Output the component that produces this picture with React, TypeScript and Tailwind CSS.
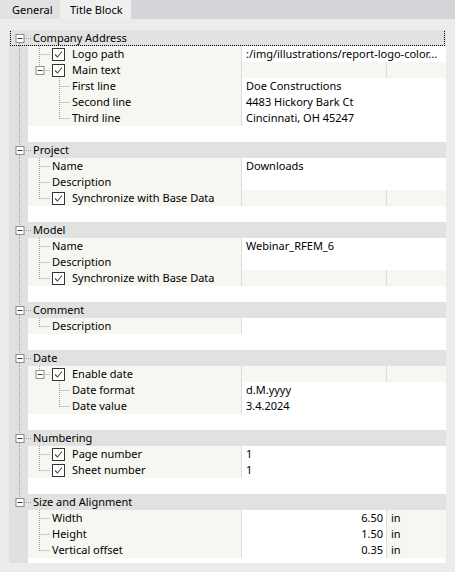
import React from "react";

type ValKind = "white" | "cream" | "split" | "unit" | "none";

type Item = {
  label: string;
  check?: boolean;
  expand?: boolean;
  value?: string;
  kind?: ValKind;
  unit?: string;
  children?: Item[];
};

type Group = { title: string; focused?: boolean; items: Item[] };

const groups: Group[] = [
  {
    title: "Company Address",
    focused: true,
    items: [
      { label: "Logo path", check: true, value: ":/img/illustrations/report-logo-color...", kind: "white" },
      {
        label: "Main text",
        check: true,
        expand: true,
        kind: "split",
        children: [
          { label: "First line", value: "Doe Constructions", kind: "white" },
          { label: "Second line", value: "4483 Hickory Bark Ct", kind: "white" },
          { label: "Third line", value: "Cincinnati, OH 45247", kind: "white" },
        ],
      },
    ],
  },
  {
    title: "Project",
    items: [
      { label: "Name", value: "Downloads", kind: "white" },
      { label: "Description", value: "", kind: "white" },
      { label: "Synchronize with Base Data", check: true, kind: "split" },
    ],
  },
  {
    title: "Model",
    items: [
      { label: "Name", value: "Webinar_RFEM_6", kind: "white" },
      { label: "Description", value: "", kind: "white" },
      { label: "Synchronize with Base Data", check: true, kind: "split" },
    ],
  },
  {
    title: "Comment",
    items: [{ label: "Description", value: "", kind: "white" }],
  },
  {
    title: "Date",
    items: [
      {
        label: "Enable date",
        check: true,
        expand: true,
        kind: "split",
        children: [
          { label: "Date format", value: "d.M.yyyy", kind: "white" },
          { label: "Date value", value: "3.4.2024", kind: "white" },
        ],
      },
    ],
  },
  {
    title: "Numbering",
    items: [
      { label: "Page number", check: true, value: "1", kind: "white" },
      { label: "Sheet number", check: true, value: "1", kind: "white" },
    ],
  },
  {
    title: "Size and Alignment",
    items: [
      { label: "Width", value: "6.50", unit: "in", kind: "unit" },
      { label: "Height", value: "1.50", unit: "in", kind: "unit" },
      { label: "Vertical offset", value: "0.35", unit: "in", kind: "unit" },
    ],
  },
];

const LINE = "#a0a0a0";

function Dots({ x1, y1, x2, y2 }: { x1: number; y1: number; x2: number; y2: number }) {
  return <line x1={x1} y1={y1} x2={x2} y2={y2} stroke={LINE} strokeWidth={1} strokeDasharray="1 1" />;
}

function Box({ cx }: { cx: number }) {
  return (
    <g>
      <rect x={cx - 3.5} y={4.5} width={8} height={8} fill="#ffffff" stroke="#8c8c8c" strokeWidth={1} />
      <line x1={cx - 2} y1={8.5} x2={cx + 3} y2={8.5} stroke="#404040" strokeWidth={1} />
    </g>
  );
}

function CheckBox() {
  return (
    <svg width="13" height="13" viewBox="0 0 13 13" className="shrink-0">
      <rect x="0.5" y="0.5" width="12" height="12" fill="#ffffff" stroke="#333333" />
      <polyline points="3,6.5 5.5,9 10,3.5" fill="none" stroke="#4a4a4a" strokeWidth="1.1" />
    </svg>
  );
}

function StripeCell({ groupLast, header, first }: { groupLast: boolean; header?: boolean; first?: boolean }) {
  return (
    <svg width="19" height="16" className="shrink-0">
      {header ? (
        <>
          {!first && <Dots x1={10.5} y1={0} x2={10.5} y2={4} />}
          {!groupLast && <Dots x1={10.5} y1={13} x2={10.5} y2={16} />}
          <Dots x1={15} y1={8.5} x2={19} y2={8.5} />
          <Box cx={10.5} />
        </>
      ) : (
        !groupLast && <Dots x1={10.5} y1={0} x2={10.5} y2={16} />
      )}
    </svg>
  );
}

function ValueCell({ item }: { item: Item }) {
  const k = item.kind ?? "white";
  if (k === "unit") {
    return (
      <div className="flex flex-1 h-full">
        <div className="w-[145px] h-full bg-white text-right pr-[3px] border-l border-[#dcdcdc]">{item.value}</div>
        <div className="flex-1 h-full bg-[#f7f7f1] pl-[4px] border-l border-[#dcdcdc]">{item.unit}</div>
      </div>
    );
  }
  if (k === "split") {
    return (
      <div className="flex flex-1 h-full">
        <div className="w-[145px] h-full bg-[#f7f7f1] border-l border-[#dcdcdc]" />
        <div className="flex-1 h-full bg-[#f7f7f1] border-l border-[#dcdcdc]" />
      </div>
    );
  }
  return (
    <div className="flex-1 min-w-0 h-full bg-white border-l border-[#dcdcdc] pl-[4px] whitespace-nowrap overflow-hidden">
      {item.value}
    </div>
  );
}

function ItemRow({
  item,
  level,
  groupLast,
  isLast,
  parentContinues,
}: {
  item: Item;
  level: 1 | 2;
  groupLast: boolean;
  isLast: boolean;
  parentContinues?: boolean;
}) {
  const w = level === 1 ? 24 : 44;
  const cx = level === 1 ? 11.5 : 31.5;
  const hasKids = !!item.children;
  return (
    <div className="flex h-4 items-stretch">
      <StripeCell groupLast={groupLast} />
      <div className="flex flex-1 bg-[#f7f7f1]">
        <div className="flex w-[213px] shrink-0 items-center">
          <svg width={w} height="16" className="shrink-0">
            {level === 2 && parentContinues && <Dots x1={11.5} y1={0} x2={11.5} y2={16} />}
            {hasKids ? (
              <>
                <Dots x1={cx} y1={0} x2={cx} y2={4} />
                {!isLast && <Dots x1={cx} y1={13} x2={cx} y2={16} />}
                <Dots x1={cx + 5} y1={8.5} x2={w - 2} y2={8.5} />
                <Box cx={cx} />
              </>
            ) : (
              <>
                <Dots x1={cx} y1={0} x2={cx} y2={isLast ? 9 : 16} />
                <Dots x1={cx + 1} y1={8.5} x2={cx + 11} y2={8.5} />
              </>
            )}
          </svg>
          {item.check && <CheckBox />}
          <span className={item.check ? "ml-[7px] whitespace-nowrap" : "whitespace-nowrap"}>{item.label}</span>
        </div>
        <ValueCell item={item} />
      </div>
    </div>
  );
}

export default function App() {
  return (
    <div
      className="w-[455px] h-[572px] bg-[#ececec] text-black text-[11px] leading-4 overflow-hidden"
      style={{ fontFamily: '"Noto Sans", "Open Sans", sans-serif' }}
    >
      <div className="flex h-[19px] bg-[#d5d5d9]">
        <div className="w-[60px] flex items-center pl-[12px] bg-[#e2e2e2]">General</div>
        <div className="w-[71px] flex items-center pl-[10px] bg-[#efefef]">Title Block</div>
      </div>
      <div className="px-[9px] pt-[11px]">
        <div className="h-[533px] overflow-hidden bg-[#e0e0e0] flex flex-col">
          {groups.map((g, gi) => {
            const groupLast = gi === groups.length - 1;
            const rows: React.ReactNode[] = [];
            rows.push(
              <div key="h" className="relative flex h-4 bg-[#e1e1e1] items-center">
                <StripeCell groupLast={groupLast} header first={gi === 0} />
                <svg width="4" height="16" className="shrink-0">
                  <Dots x1={0} y1={8.5} x2={3} y2={8.5} />
                </svg>
                <span className="pl-[1px] whitespace-nowrap">{g.title}</span>
                {g.focused && (
                  <div className="absolute left-[1px] right-[1px] top-[-1px] bottom-0 border border-dotted border-black pointer-events-none" />
                )}
              </div>
            );
            g.items.forEach((it, ii) => {
              const last = ii === g.items.length - 1;
              rows.push(
                <ItemRow key={`i${ii}`} item={it} level={1} groupLast={groupLast} isLast={last} />
              );
              it.children?.forEach((c, ci) => {
                rows.push(
                  <ItemRow
                    key={`i${ii}c${ci}`}
                    item={c}
                    level={2}
                    groupLast={groupLast}
                    isLast={ci === it.children!.length - 1}
                    parentContinues={!last}
                  />
                );
              });
            });
            rows.push(
              <div key="b" className="flex h-4">
                <StripeCell groupLast={groupLast} />
                <div className="flex-1 bg-white" />
              </div>
            );
            return <React.Fragment key={gi}>{rows}</React.Fragment>;
          })}
        </div>
      </div>
    </div>
  );
}
